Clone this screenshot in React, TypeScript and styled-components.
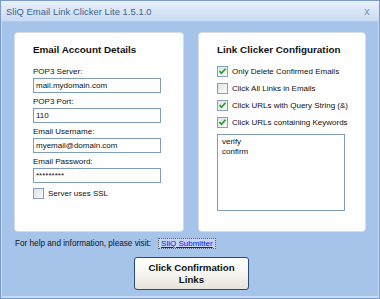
import React from "react";
import styled, { createGlobalStyle } from "styled-components";

const Global = createGlobalStyle`
  html, body { margin: 0; padding: 0; background: #a6c4ea; }
  body { font-family: "Liberation Sans", Arial, sans-serif; }
  * { box-sizing: border-box; }
`;

const Window = styled.div`
  width: 380px;
  height: 299px;
  border: 1px solid #7a9bcb;
  box-shadow: inset 1px 0 0 #c7daf2, inset -1px 0 0 #c7daf2, inset 0 -2px 0 #c7daf2;
  background: #a6c4ea;
  display: flex;
  flex-direction: column;
  font-family: "Liberation Sans", Arial, sans-serif;
`;

const TitleBar = styled.div`
  height: 21px;
  flex: none;
  display: flex;
  align-items: center;
  justify-content: space-between;
  padding: 0 9px 0 5px;
  background: linear-gradient(#eaf1fb, #d6e4f6 55%, #c8dbf3);
  border-bottom: 1px solid #b3cbea;
`;

const Title = styled.span`
  font-size: 9.4px;
  color: #3d6399;
  letter-spacing: 0.05px;
`;

const Close = styled.span`
  font-family: "DejaVu Sans", sans-serif;
  font-size: 10px;
  color: #8396b0;
`;

const Body = styled.div`
  flex: 1;
  display: flex;
  flex-direction: column;
  padding: 10px 13px 0 13px;
`;

const Panels = styled.div`
  display: flex;
  gap: 14px;
  height: 200px;
`;

const Panel = styled.div<{ $w: number }>`
  width: ${(p) => p.$w}px;
  height: 100%;
  background: #fff;
  border: 1px solid #d4dce6;
  border-radius: 4px;
  padding: 11px 0 0 18px;
  display: flex;
  flex-direction: column;
`;

const Heading = styled.div`
  font-size: 9.9px;
  font-weight: bold;
  line-height: 12px;
  color: #111;
  margin-bottom: 11px;
`;

const Field = styled.div`
  display: flex;
  flex-direction: column;
  margin-bottom: 4px;
`;

const Label = styled.label`
  font-size: 8px;
  line-height: 10px;
  color: #111;
  margin-bottom: 1px;
`;

const TextInput = styled.input`
  width: 128px;
  height: 15px;
  border: 1px solid #7f9db9;
  background: #fff;
  font-family: "Liberation Sans", Arial, sans-serif;
  font-size: 8px;
  color: #111;
  padding: 0 2px;
  margin: 0;
  outline: none;
`;

const CheckRow = styled.div<{ $h?: number }>`
  display: flex;
  align-items: center;
  gap: 4px;
  height: ${(p) => p.$h ?? 17}px;
  font-size: 8px;
  color: #111;
`;

const Box = styled.span`
  width: 11px;
  height: 11px;
  flex: none;
  border: 1px solid #8aa0ba;
  background: linear-gradient(135deg, #dfe4ea, #f8f9fb);
  display: flex;
  align-items: center;
  justify-content: center;
`;

const CheckList = styled.div`
  display: flex;
  flex-direction: column;
  margin-top: -4px;
`;

const KeywordArea = styled.textarea`
  width: 128px;
  height: 77px;
  margin-top: 3px;
  border: 1px solid #7f9db9;
  resize: none;
  font-family: "Liberation Sans", Arial, sans-serif;
  font-size: 8px;
  line-height: 10px;
  color: #111;
  padding: 2px 4px;
  outline: none;
  overflow: hidden;
`;

const HelpRow = styled.div`
  display: flex;
  align-items: center;
  gap: 7px;
  margin-top: 6px;
  height: 11px;
  padding-left: 1px;
  font-size: 8.2px;
  color: #111;
`;

const LinkBox = styled.a`
  display: inline-flex;
  align-items: center;
  height: 11px;
  padding: 0 2px;
  border: 1px dotted #55606c;
  background: #c3d5f0;
  color: #1010ff;
  text-decoration: underline;
  font-size: 8px;
`;

const ButtonRow = styled.div`
  display: flex;
  justify-content: center;
  margin-top: 8px;
`;

const Button = styled.button`
  width: 115px;
  height: 33px;
  margin-left: 3px;
  border: 1px solid #2a4a78;
  border-radius: 3px;
  background: linear-gradient(#ffffff, #f4f3ee 60%, #e6e3d8);
  font-family: "Liberation Sans", Arial, sans-serif;
  font-weight: bold;
  font-size: 9.7px;
  line-height: 11.5px;
  color: #111;
  padding: 0;
`;

const Check = ({ checked }: { checked: boolean }) => (
  <Box>
    {checked && (
      <svg width="9" height="9" viewBox="0 0 9 9">
        <path d="M1.5 4.2 L3.5 6.3 L7.5 1.8" fill="none" stroke="#21a321" strokeWidth="1.7" />
      </svg>
    )}
  </Box>
);

const fields = [
  { label: "POP3 Server:", value: "mail.mydomain.com" },
  { label: "POP3 Port:", value: "110" },
  { label: "Email Username:", value: "myemail@domain.com" },
  { label: "Email Password:", value: "*********" },
];

const options = [
  { text: "Only Delete Confirmed Emails", checked: true },
  { text: "Click All Links in Emails", checked: false },
  { text: "Click URLs with Query String (&)", checked: true },
  { text: "Click URLs containing Keywords", checked: true },
];

export default function App() {
  return (
    <>
      <Global />
      <Window>
        <TitleBar>
          <Title>SliQ Email Link Clicker Lite 1.5.1.0</Title>
          <Close>x</Close>
        </TitleBar>
        <Body>
          <Panels>
            <Panel $w={170}>
              <Heading>Email Account Details</Heading>
              {fields.map((f) => (
                <Field key={f.label}>
                  <Label>{f.label}</Label>
                  <TextInput defaultValue={f.value} />
                </Field>
              ))}
              <CheckRow $h={13}>
                <Check checked={false} />
                <span>Server uses SSL</span>
              </CheckRow>
            </Panel>
            <Panel $w={168}>
              <Heading>Link Clicker Configuration</Heading>
              <CheckList>
                {options.map((o) => (
                  <CheckRow key={o.text}>
                    <Check checked={o.checked} />
                    <span>{o.text}</span>
                  </CheckRow>
                ))}
              </CheckList>
              <KeywordArea defaultValue={"verify\nconfirm"} />
            </Panel>
          </Panels>
          <HelpRow>
            <span>For help and information, please visit:</span>
            <LinkBox href="#">SliQ Submitter</LinkBox>
          </HelpRow>
          <ButtonRow>
            <Button>
              Click Confirmation
              <br />
              Links
            </Button>
          </ButtonRow>
        </Body>
      </Window>
    </>
  );
}
